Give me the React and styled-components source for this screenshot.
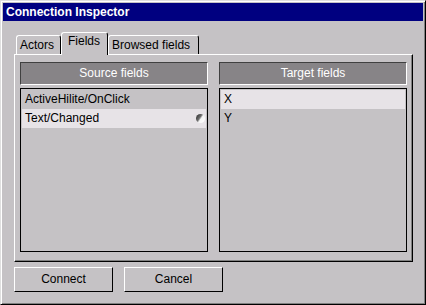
import React from "react";
import styled, { createGlobalStyle } from "styled-components";

const GlobalStyle = createGlobalStyle`
  html, body { margin: 0; padding: 0; background: #c5c2c5; }
  body { font-family: "Liberation Sans", Arial, sans-serif; font-size: 12px; color: #000; }
  * { box-sizing: border-box; }
`;

const Window = styled.div`
  width: 426px;
  height: 305px;
  background: #c5c2c5;
  border: 1px solid;
  border-color: #dfdfdf #000 #000 #dfdfdf;
  box-shadow: inset 1px 1px 0 #fff, inset -1px -1px 0 #808080;
  padding: 2px;
  display: flex;
  flex-direction: column;
`;

const TitleBar = styled.div`
  height: 18px;
  background: #000080;
  color: #fff;
  font-weight: bold;
  font-size: 12px;
  line-height: 18px;
  padding-left: 3px;
  white-space: nowrap;
`;

const Body = styled.div`
  padding: 11px 10px 0 11px;
  display: flex;
  flex-direction: column;
`;

const TabStrip = styled.div`
  display: flex;
  align-items: flex-end;
  height: 22px;
  padding-left: 2px;
`;

const Tab = styled.div`
  position: relative;
  z-index: ${(p) => (p.$active ? 1 : 0)};
  height: ${(p) => (p.$active ? "23px" : "19px")};
  margin-bottom: ${(p) => (p.$active ? "-1px" : "0")};
  padding: ${(p) => (p.$active ? "1px 7px 0 6px" : `2px ${p.$pr || 6}px 0 3px`)};
  line-height: 14px;
  background: #c5c2c5;
  border-top: 1px solid #fff;
  border-left: 1px solid #fff;
  border-right: 1px solid #000;
  border-radius: 3px 3px 0 0;
  white-space: nowrap;
`;

const Panel = styled.div`
  height: 208px;
  border: 1px solid;
  border-color: #fff #000 #000 #fff;
  box-shadow: inset -1px -1px 0 #808080;
  padding: 7px 5px 9px 5px;
  display: grid;
  grid-template-columns: 1fr 1fr;
  column-gap: 11px;
`;

const Column = styled.div`
  display: flex;
  flex-direction: column;
  min-height: 0;
`;

const Header = styled.div`
  height: 23px;
  margin-bottom: 3px;
  background: #878487;
  color: #fff;
  text-align: center;
  line-height: 20px;
  border: 1px solid;
  border-color: #404040 #fff #fff #404040;
`;

const List = styled.div`
  flex: 1;
  border: 1px solid #000;
  padding: 1px;
`;

const Row = styled.div`
  height: 19px;
  line-height: 17px;
  padding: 0 1px 0 3px;
  display: flex;
  align-items: center;
  justify-content: space-between;
  background: ${(p) => (p.$selected ? "#e7e3e7" : "transparent")};
  white-space: nowrap;
`;

const ButtonRow = styled.div`
  display: flex;
  gap: 11px;
  margin-top: 5px;
`;

const Button = styled.div`
  width: 99px;
  height: 25px;
  border: 1px solid;
  border-color: #fff #000 #000 #fff;
  text-align: center;
  line-height: 23px;
`;

const RadioDot = () => (
  <svg width="9" height="9" viewBox="0 0 9 9">
    <defs>
      <linearGradient id="rdg" x1="0" y1="0.15" x2="1" y2="0.85">
        <stop offset="0" stopColor="#2e2e2e" />
        <stop offset="0.4" stopColor="#6e6e6e" />
        <stop offset="0.55" stopColor="#f4f4f4" />
        <stop offset="1" stopColor="#ffffff" />
      </linearGradient>
    </defs>
    <circle cx="4.5" cy="4.5" r="4.5" fill="url(#rdg)" />
  </svg>
);

export default function App() {
  return (
    <>
      <GlobalStyle />
      <Window>
        <TitleBar>Connection Inspector</TitleBar>
        <Body>
          <TabStrip>
            <Tab>Actors</Tab>
            <Tab $active>Fields</Tab>
            <Tab $pr={8}>Browsed fields</Tab>
          </TabStrip>
          <Panel>
            <Column>
              <Header>Source fields</Header>
              <List>
                <Row>ActiveHilite/OnClick</Row>
                <Row $selected>
                  <span>Text/Changed</span>
                  <RadioDot />
                </Row>
              </List>
            </Column>
            <Column>
              <Header>Target fields</Header>
              <List>
                <Row $selected>X</Row>
                <Row>Y</Row>
              </List>
            </Column>
          </Panel>
          <ButtonRow>
            <Button>Connect</Button>
            <Button>Cancel</Button>
          </ButtonRow>
        </Body>
      </Window>
    </>
  );
}
